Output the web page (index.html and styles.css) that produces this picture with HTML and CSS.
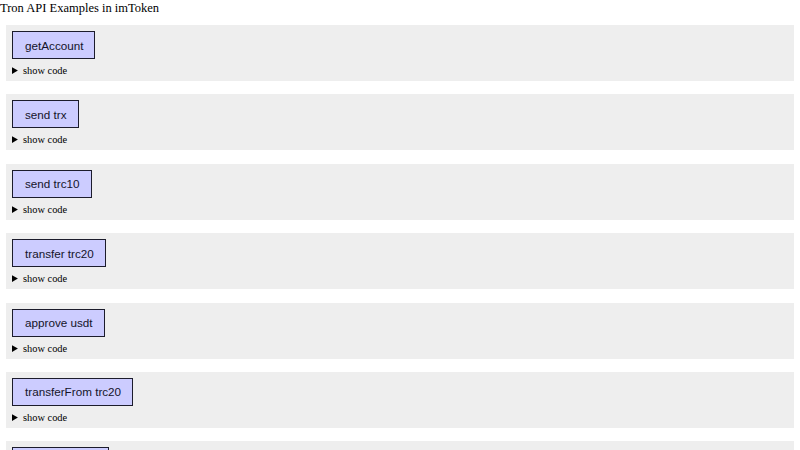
FILE: index.html
```html
<!DOCTYPE html>
<html lang="en">
<head>
    <meta charset="UTF-8">
    <meta name="viewport" content="width=device-width, initial-scale=1.0">
    <title>Tron API Examples in imToken</title>
    <link rel="stylesheet" href="styles.css">
</head>
<body>
    <div class="title">Tron API Examples in imToken</div>

    <div class="example">
        <button class="btn">getAccount</button>
        <details>
            <summary>show code</summary>
            <pre>const account = await tronWeb.trx.getAccount(tronWeb.defaultAddress.base58)</pre>
        </details>
    </div>

    <div class="example">
        <button class="btn">send trx</button>
        <details>
            <summary>show code</summary>
            <pre>tronWeb.trx.sendTransaction(to, amount)</pre>
        </details>
    </div>

    <div class="example">
        <button class="btn">send trc10</button>
        <details>
            <summary>show code</summary>
            <pre>tronWeb.trx.sendToken(to, amount, tokenID)</pre>
        </details>
    </div>

    <div class="example">
        <button class="btn">transfer trc20</button>
        <details>
            <summary>show code</summary>
            <pre>contract.transfer(to, amount).send()</pre>
        </details>
    </div>

    <div class="example">
        <button class="btn">approve usdt</button>
        <details>
            <summary>show code</summary>
            <pre>contract.approve(spender, amount).send()</pre>
        </details>
    </div>

    <div class="example">
        <button class="btn">transferFrom trc20</button>
        <details>
            <summary>show code</summary>
            <pre>contract.transferFrom(from, to, amount).send()</pre>
        </details>
    </div>

    <div class="example">
        <button class="btn">sign message</button>
        <details>
            <summary>show code</summary>
            <pre>tronWeb.trx.sign(message)</pre>
        </details>
    </div>
</body>
</html>
```

FILE: styles.css
```css
body {
    margin: 0;
    font-family: 'Liberation Serif', serif;
    color: #000;
    background: #fff;
}

.title {
    font-size: 12.5px;
    line-height: 16px;
    margin-bottom: 9px;
}

.example {
    background-color: #eee;
    margin: 0 6px 13.4px 6px;
    padding: 6px;
    height: 44px;
}

.btn {
    display: block;
    font-family: 'Liberation Sans', Arial, sans-serif;
    font-size: 11.7px;
    color: #14142a;
    background-color: #ccf;
    border: 1.6px solid #1c1c2c;
    padding: 0 11px 0 12px;
    height: 28px;
    margin-bottom: 3px;
}

details summary {
    font-size: 10.4px;
    line-height: 17px;
    cursor: pointer;
}

details pre {
    margin: 4px 0;
    font-size: 10px;
}
```
